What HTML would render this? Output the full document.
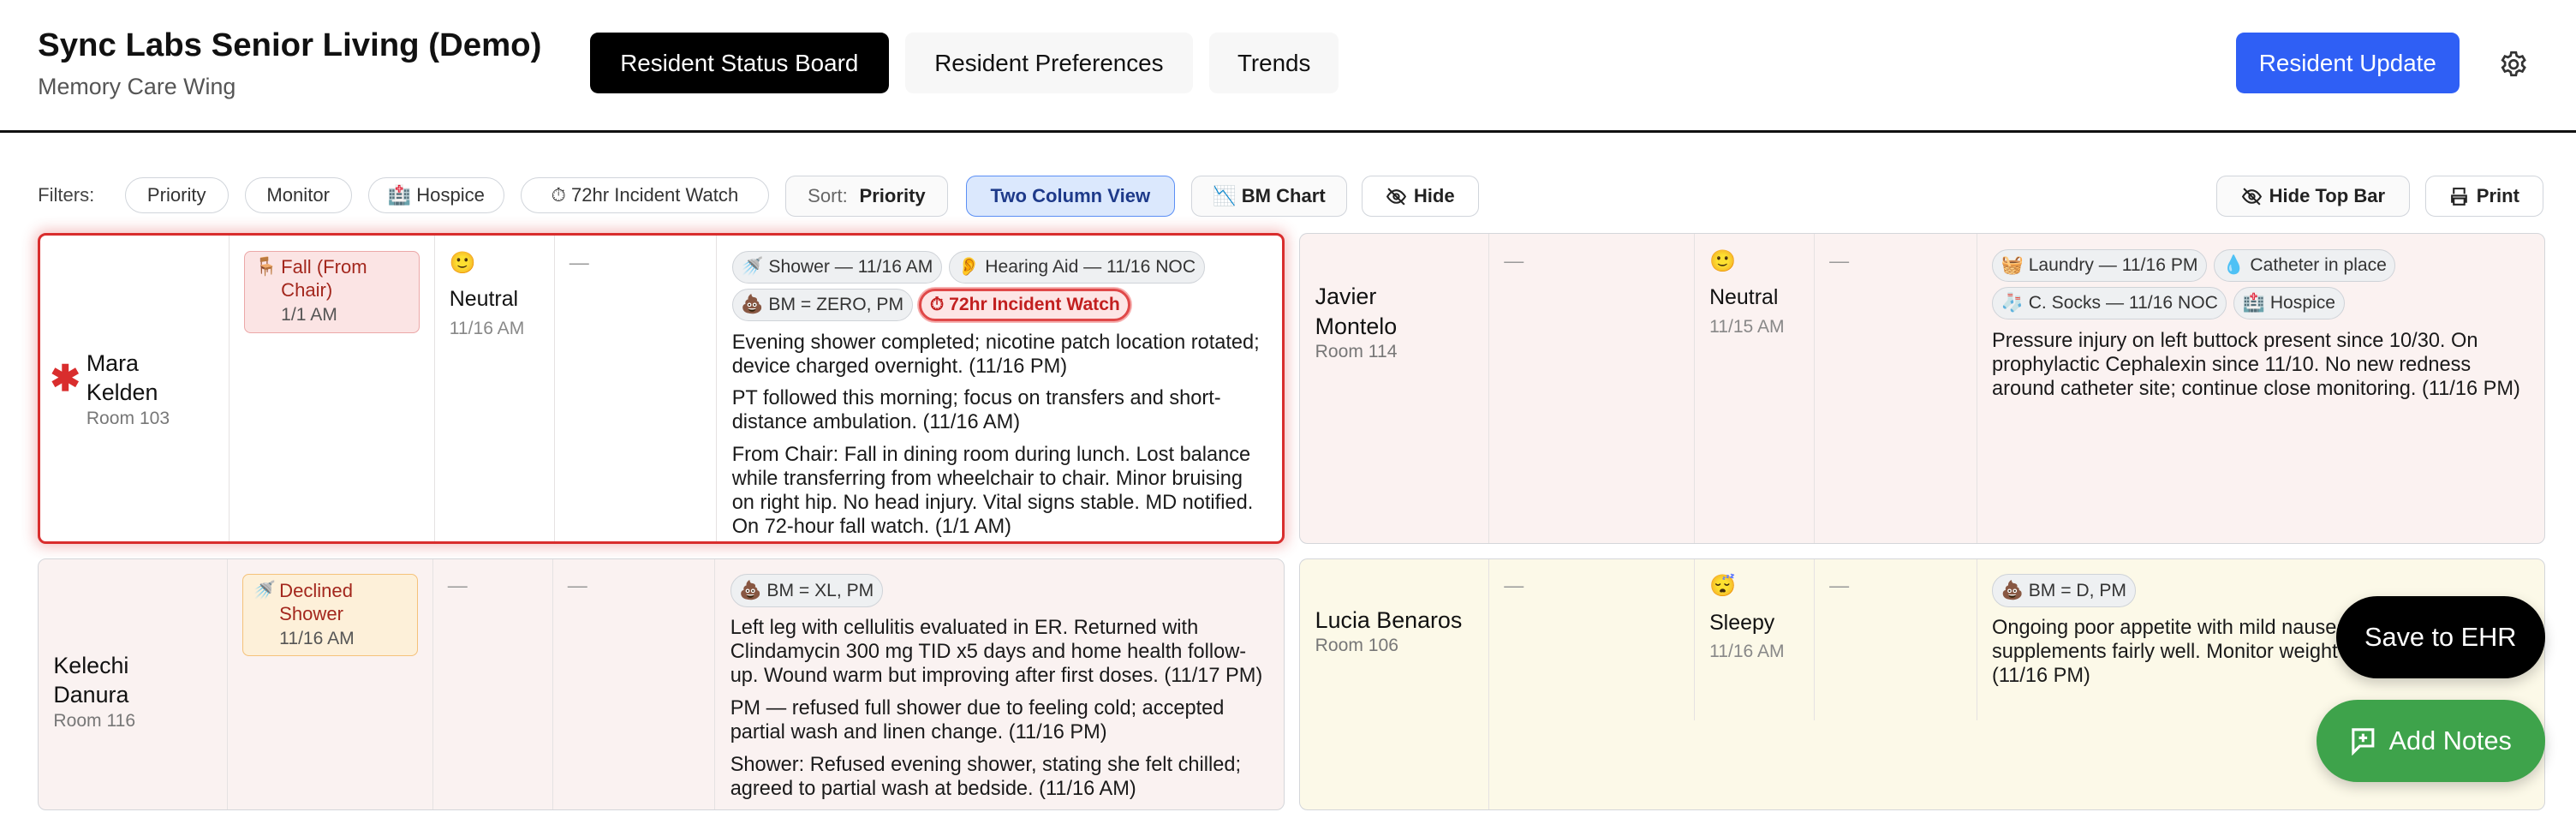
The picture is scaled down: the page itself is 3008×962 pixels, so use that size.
<!DOCTYPE html>
<html><head><meta charset="utf-8"><style>
*{box-sizing:border-box;margin:0;padding:0}
html,body{width:3008px;height:962px;overflow:hidden;background:#fff}
#root{zoom:1.91837;width:1568px;height:501.5px;position:relative;font-family:"Liberation Sans","Noto Sans CJK SC",sans-serif;color:#111}
.abs{position:absolute}
.title{left:23px;top:16px;font-size:20px;font-weight:bold}
.sub{left:23px;top:45px;font-size:14px;color:#555}
.tab{top:20px;height:37px;border-radius:5px;font-size:14.5px;display:flex;align-items:center;justify-content:center;background:#f7f7f7;color:#111}
.hr{left:0;top:79px;width:1568px;height:2px;background:#111}
.pill{top:108px;height:22px;border:1px solid #d1d5db;border-radius:11px;font-size:11.5px;display:flex;align-items:center;justify-content:center;color:#333;background:#fff;gap:3px}
.btn{top:107px;height:25px;border:1px solid #d1d5db;border-radius:6px;font-size:11.5px;display:flex;align-items:center;justify-content:center;color:#222;background:#fafafa;font-weight:bold;gap:4px}
.card{border:1px solid #d4d6da;border-radius:5px;display:flex;overflow:hidden}
.col{border-right:1px solid #e5e2e2;padding:9px 9px 0}
.col:last-child{border-right:none}
.name{display:flex;flex-direction:column;justify-content:center;padding-left:28px;font-size:14px;line-height:18px}
.room{font-size:11px;color:#777;line-height:14px}
.dash{color:#999;font-size:12px;padding-top:9px}
.mood .e{font-size:13px;height:20px}
.mood .m{font-size:13px;margin-top:2px}
.mood .d{font-size:11px;color:#888;margin-top:4px}
.chips{display:flex;flex-wrap:wrap;gap:3px 4px;margin-bottom:5px}
.chip{height:20px;border:1px solid #cfd3d8;background:#eef0f2;border-radius:10px;font-size:11px;padding:0 5px;display:flex;align-items:center;color:#333;white-space:nowrap}
.note{font-size:12.3px;line-height:14.6px;margin-bottom:5px;color:#1a1a1a}
.evt{border-radius:4px;padding:3px 6px 3px 22px;font-size:11.5px;line-height:14px;position:relative}
.evt .ic{position:absolute;left:6px;top:3px;font-size:11px}
.evt .t{color:#555;font-size:11px;margin-top:1px}
</style></head><body><div id="root">
<div class="abs title">Sync Labs Senior Living (Demo)</div>
<div class="abs sub">Memory Care Wing</div>
<div class="abs tab" style="left:359px;width:182px;background:#000;color:#fff">Resident Status Board</div>
<div class="abs tab" style="left:551px;width:175px">Resident Preferences</div>
<div class="abs tab" style="left:736px;width:79px">Trends</div>
<div class="abs tab" style="left:1361px;width:136px;background:#2f5ff5;color:#fff">Resident Update</div>
<svg class="abs" style="left:1520px;top:29px" width="20" height="20" viewBox="0 0 24 24" fill="none" stroke="#333" stroke-width="1.7"><path d="M10.3 3.3h3.4l.5 2.4 1.9 1.1 2.3-.8 1.7 2.9-1.8 1.6v2.2l1.8 1.6-1.7 2.9-2.3-.8-1.9 1.1-.5 2.4h-3.4l-.5-2.4-1.9-1.1-2.3.8-1.7-2.9 1.8-1.6v-2.2L3.9 8.9l1.7-2.9 2.3.8 1.9-1.1z"/><circle cx="12" cy="12" r="3"/></svg>
<div class="abs hr"></div>

<div class="abs" style="left:23px;top:112px;font-size:11.5px;color:#444">Filters:</div>
<div class="abs pill" style="left:76px;width:63px">Priority</div>
<div class="abs pill" style="left:149px;width:65px">Monitor</div>
<div class="abs pill" style="left:224px;width:83px">🏥 Hospice</div>
<div class="abs pill" style="left:317px;width:151px">⏱ 72hr Incident Watch</div>
<div class="abs btn" style="left:478px;width:99px;font-weight:normal;color:#666">Sort:&nbsp;<b style="color:#222">Priority</b></div>
<div class="abs btn" style="left:588px;width:127px;background:#dbe8fd;border-color:#5b8ff5;color:#1e3a8a">Two Column View</div>
<div class="abs btn" style="left:725px;width:95px">📉 BM Chart</div>
<div class="abs btn" style="left:829px;width:71px;background:#fff"><svg width="13" height="13" viewBox="0 0 24 24" fill="none" stroke="#222" stroke-width="2"><path d="M2 12s4-7 10-7 10 7 10 7-4 7-10 7S2 12 2 12z"/><circle cx="12" cy="12" r="3"/><path d="M3 3l18 18"/></svg>Hide</div>
<div class="abs btn" style="left:1349px;width:118px"><svg width="13" height="13" viewBox="0 0 24 24" fill="none" stroke="#222" stroke-width="2"><path d="M2 12s4-7 10-7 10 7 10 7-4 7-10 7S2 12 2 12z"/><circle cx="12" cy="12" r="3"/><path d="M3 3l18 18"/></svg>Hide Top Bar</div>
<div class="abs btn" style="left:1476px;width:72px;background:#fff"><svg width="13" height="13" viewBox="0 0 24 24" fill="none" stroke="#222" stroke-width="2"><path d="M6 9V3h12v6M6 18H4v-7h16v7h-2M6 14h12v7H6z"/></svg>Print</div>

<!-- card 1 -->
<div class="abs card" style="left:23px;top:142px;width:759px;height:189px;border:2px solid #d92d2d;box-shadow:0 0 8px 2px rgba(220,60,60,.3);background:#fff">
 <div class="col name" style="width:115px;position:relative;padding-bottom:8px">Mara<br>Kelden<div class="room">Room 103</div><span style="position:absolute;left:6px;top:78px;color:#d92d2d;font-size:22px;font-weight:bold">✱</span></div>
 <div class="col" style="width:125px"><div class="evt" style="background:#fbe4e4;border:1px solid #eca8a8;color:#a3271d;width:107px"><span class="ic">🪑</span>Fall (From Chair)<div class="t">1/1 AM</div></div></div>
 <div class="col mood" style="width:73px"><div class="e">🙂</div><div class="m">Neutral</div><div class="d">11/16 AM</div></div>
 <div class="col dash" style="width:99px">—</div>
 <div class="col" style="flex:1">
  <div class="chips"><span class="chip">🚿 Shower — 11/16 AM</span><span class="chip">👂 Hearing Aid — 11/16 NOC</span><span class="chip">💩 BM = ZERO, PM</span><span class="chip" style="background:#fde5e5;border:2px solid #e04848;color:#c21f1f;font-weight:bold;box-shadow:0 0 0 1px #f5aaaa">⏱ 72hr Incident Watch</span></div>
  <div class="note">Evening shower completed; nicotine patch location rotated; device charged overnight. (11/16 PM)</div>
  <div class="note">PT followed this morning; focus on transfers and short-distance ambulation. (11/16 AM)</div>
  <div class="note">From Chair: Fall in dining room during lunch. Lost balance while transferring from wheelchair to chair. Minor bruising on right hip. No head injury. Vital signs stable. MD notified. On 72-hour fall watch. (1/1 AM)</div>
 </div>
</div>

<!-- card 2 -->
<div class="abs card" style="left:791px;top:142px;width:758px;height:189px;background:#fbf2f1">
 <div class="col name" style="width:115px;padding-left:9px;justify-content:flex-start;padding-top:29px">Javier<br>Montelo<div class="room">Room 114</div></div>
 <div class="col dash" style="width:125px">—</div>
 <div class="col mood" style="width:73px"><div class="e">🙂</div><div class="m">Neutral</div><div class="d">11/15 AM</div></div>
 <div class="col dash" style="width:99px">—</div>
 <div class="col" style="flex:1;height:107px">
  <div class="chips"><span class="chip">🧺 Laundry — 11/16 PM</span><span class="chip">💧 Catheter in place</span><span class="chip">🧦 C. Socks — 11/16 NOC</span><span class="chip">🏥 Hospice</span></div>
  <div class="note">Pressure injury on left buttock present since 10/30. On prophylactic Cephalexin since 11/10. No new redness around catheter site; continue close monitoring. (11/16 PM)</div>
 </div>
</div>

<!-- card 3 -->
<div class="abs card" style="left:23px;top:340px;width:759px;height:153px;background:#faf2f1">
 <div class="col name" style="width:115px;padding-left:9px">Kelechi<br>Danura<div class="room">Room 116</div></div>
 <div class="col" style="width:125px"><div class="evt" style="background:#fdf0d9;border:1px solid #f5c27a;color:#a3271d;width:107px"><span class="ic">🚿</span>Declined Shower<div class="t">11/16 AM</div></div></div>
 <div class="col dash" style="width:73px">—</div>
 <div class="col dash" style="width:99px">—</div>
 <div class="col" style="flex:1">
  <div class="chips"><span class="chip">💩 BM = XL, PM</span></div>
  <div class="note">Left leg with cellulitis evaluated in ER. Returned with Clindamycin 300 mg TID x5 days and home health follow-up. Wound warm but improving after first doses. (11/17 PM)</div>
  <div class="note">PM — refused full shower due to feeling cold; accepted partial wash and linen change. (11/16 PM)</div>
  <div class="note">Shower: Refused evening shower, stating she felt chilled; agreed to partial wash at bedside. (11/16 AM)</div>
 </div>
</div>

<!-- card 4 -->
<div class="abs card" style="left:791px;top:340px;width:758px;height:153px;background:#fcf9e8">
 <div class="col name" style="width:115px;padding-left:9px;justify-content:flex-start;padding-top:28px">Lucia Benaros<div class="room">Room 106</div></div>
 <div class="col dash" style="width:125px;height:98px">—</div>
 <div class="col mood" style="width:73px;height:98px"><div class="e">😴</div><div class="m">Sleepy</div><div class="d">11/16 AM</div></div>
 <div class="col dash" style="width:99px;height:98px">—</div>
 <div class="col" style="flex:1;height:98px">
  <div class="chips"><span class="chip">💩 BM = D, PM</span></div>
  <div class="note">Ongoing poor appetite with mild nausea; taking supplements fairly well. Monitor weight for further decline. (11/16 PM)</div>
 </div>
</div>

<div class="abs" style="left:1422px;top:363px;width:127px;height:50px;border-radius:25px;background:#000;color:#fff;font-size:16px;display:flex;align-items:center;justify-content:center;box-shadow:0 3px 8px rgba(0,0,0,.2)">Save to EHR</div>
<div class="abs" style="left:1410px;top:426px;width:139px;height:50px;border-radius:25px;background:#3ea34b;color:#fff;font-size:16px;display:flex;align-items:center;justify-content:center;gap:8px;box-shadow:0 3px 8px rgba(0,0,0,.2)"><svg width="16" height="18" viewBox="0 0 16 18" fill="none" stroke="#fff" stroke-width="1.6"><path d="M2 2h12v10H6l-4 4z"/><path d="M8 4.5v5M5.5 7h5"/></svg>Add Notes</div>
</div></body></html>
